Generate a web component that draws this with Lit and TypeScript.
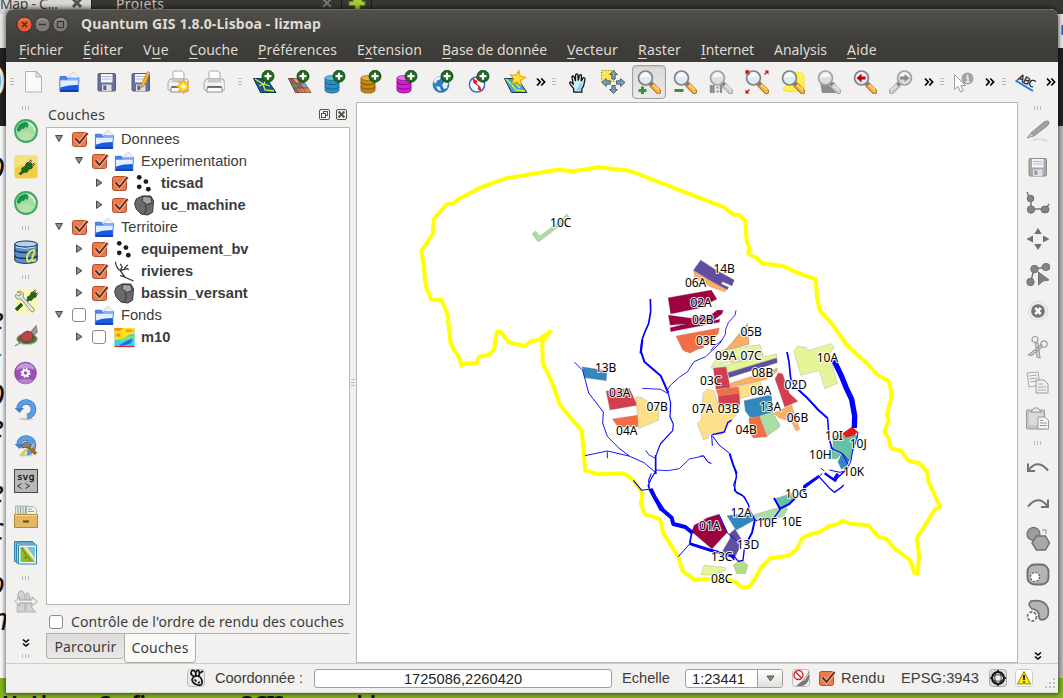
import { LitElement, html, svg, css } from "lit";
import { customElement, property } from "lit/decorators.js";
import { styleMap } from "lit/directives/style-map.js";

/* ---------- label whose tracking is adjusted to a given advance width ---------- */
@customElement("fit-label")
class FitLabel extends LitElement {
  static styles = css`
    :host { display: inline-block; white-space: pre; }
    u { text-decoration-thickness: 1px; text-underline-offset: 3px; }
  `;
  @property({ type: Number }) w = 0;
  @property() text = "";
  @property({ type: Number }) key = -1;
  updated() {
    const s = this.renderRoot.querySelector("span") as HTMLElement;
    s.style.letterSpacing = "0px";
    const n = s.getBoundingClientRect().width;
    s.style.letterSpacing = (this.w - n) / this.text.length + "px";
  }
  render() {
    const k = this.key, t = this.text;
    return k < 0
      ? html`<span>${t}</span>`
      : html`<span>${t.slice(0, k)}<u>${t[k]}</u>${t.slice(k + 1)}</span>`;
  }
}

/* ---------- icons, 24 x 24 ---------- */
const plus = svg`<circle cx="15" cy="6.200" r="6" fill="#1f6b22" stroke="#0f4412" stroke-width=".8"/><path d="M15 2.700v7M11.500 6.200h7" stroke="#fff" stroke-width="2.2"/>`;
const dbBody = (a: string, b: string, c: string) => svg`
  <path d="M1 8v12c0 4 14 4 14 0V8z" fill=${a} stroke=${b} stroke-width=".8"/>
  <ellipse cx="8" cy="8" rx="7" ry="2.5" fill=${c} stroke=${b} stroke-width=".6"/>
  <path d="M1 12c0 3.4 14 3.4 14 0M1 16.5c0 3.4 14 3.4 14 0" fill="none" stroke=${b} stroke-width="1"/>${plus}`;
const lens = (o: any = "", grey = false) => svg`
  <path d="M14.5 14.5l7 7" stroke=${grey ? "#9e9e9e" : "#a8691a"} stroke-width="5.4" stroke-linecap="round"/>
  <path d="M14.5 14.5l7 7" stroke=${grey ? "#cfcfcf" : "#fbb23c"} stroke-width="3.8" stroke-linecap="round"/>
  <path d="M15.5 13.8l6.6 6.2" stroke=${grey ? "#eee" : "#ffe3a0"} stroke-width="1.2"/>
  <path d="M13 12.5l2.6 2.6" stroke="#777" stroke-width="3"/>
  <circle cx="8.5" cy="8" r="7" fill=${grey ? "#dedede" : "#dfeaf3"} stroke=${grey ? "#a2a2a2" : "#7d8388"} stroke-width="1.7"/>
  <path d="M3.5 8a5 5 0 0 1 10-1q-5-1-10 1z" fill="#fff" opacity=".75"/>${o}`;
const printer = svg`
  <path d="M6 9V2q0-1 1-1h8l2 2v6z" fill="#fff" stroke="#aaa"/>
  <path d="M3 9h17l2 4v6q0 1-1 1H2q-1 0-1-1v-6z" fill="#ececea" stroke="#a5a5a5"/>
  <path d="M5 9.5h13v3H5z" fill="#c9c9c9"/>
  <path d="M2 14h19" stroke="#fff"/><path d="M4.5 17h14l.8 5H3.7z" fill="#fafafa" stroke="#777" stroke-width=".8"/>
  <path d="M4.5 17h14" stroke="#555" stroke-width="1.6"/>`;
const floppy = (c1: string, c2: string, c3: string) => svg`
  <rect x="5" y="3.5" width="17.5" height="17.5" rx="1.2" fill=${c1} stroke=${c2}/>
  <rect x="8" y="4" width="11.5" height="8.5" fill="#f3f4f8"/><path d="M9 6.5h9.5M9 9h9.5" stroke="#b3b9c6"/>
  <rect x="9" y="14.5" width="9.5" height="6.5" fill="#dcdfe6"/><rect x="10.3" y="15.5" width="3" height="4.5" fill=${c3}/>`;
const folder = svg`
  <path d="M8 9l8-7 6 5v6H8z" fill="#f2f5fb" stroke="#b6c3de" stroke-width=".8"/>
  <path d="M10 9l6.500-5" stroke="#cfd8ea"/>
  <path d="M3 6.500h6l1.500 2.500H21v12H3z" fill="#4a86ea" stroke="#2d63c8" stroke-width=".8"/>
  <path d="M3 9.500l7 0 2-1.500h10l-1 13.300H3z" fill="#8db8f8" stroke="#3f76d8" stroke-width=".6"/>
  <path d="M3.500 10.500h17.500l-.4 4.500Q12 14.500 3.500 17.500z" fill="#e3eefe"/>
  <path d="M3.300 17.500Q12 14.500 21.200 15v6.500H3.300z" fill="#1a5ae0"/>
  <path d="M3 21h18.500" stroke="#0a3399" stroke-width="1.300"/>`;
const star = (x: number, y: number, r: number) => {
  const p = Array.from({ length: 10 }, (_, i) => {
    const a = (i * Math.PI) / 5 - 1.4, q = i % 2 ? r * 0.45 : r;
    return `${(x + q * Math.cos(a)).toFixed(1)},${(y + q * Math.sin(a)).toFixed(1)}`;
  }).join(" ");
  return svg`<polygon points=${p} fill="#ffe72e" stroke="#f2a10a" stroke-width="1.1"/>`;
};
const burst = (x: number, y: number, r: number) => {
  const p = Array.from({ length: 16 }, (_, i) => {
    const a = (i * Math.PI) / 8, q = i % 2 ? r * 0.5 : r;
    return `${(x + q * Math.cos(a)).toFixed(1)},${(y + q * Math.sin(a)).toFixed(1)}`;
  }).join(" ");
  return svg`<polygon points=${p} fill="#ffe72e" stroke="#f29a0a" stroke-width=".9"/>`;
};
const globe = svg`
  <circle cx="12" cy="12" r="11" fill="#a4d9a0" stroke="#3ea564" stroke-width="1.8"/>
  <path d="M3 11Q4 4 11 3l4 1-1.5 5-2-1.5-1.5 2.5-2-.5q-1 2-4 3.500z" fill="#169447"/>
  <path d="M14 4q6 2 7 8" fill="none" stroke="#d9f4dc" stroke-width="1.6"/><path d="M4 15q6-4 16 0-2 6-8 6.500-6-.5-8-6.500z" fill="#b4e0ae"/>`;
const plug = svg`<path d="M1.500 20.500l4-4 0-4 5-3 1.500-4.500 5-1.500 4 4-1 5-4.500 1.500-3 4.500-4-.5-4 3.500z" fill="#1a6b1d" stroke="#12380f" stroke-width="1"/><path d="M16 5l3.500-4M20 9l3.500-3.500" stroke="#222" stroke-width="2.600"/><path d="M16 5l3.500-4M20 9l3.500-3.500" stroke="#f8f8f8" stroke-width="1.200"/>`;
const refresh = svg`<ellipse cx="12" cy="22" rx="7" ry="1.3" fill="#ccc"/>
  <path d="M5 11a7.300 7.300 0 1 1 8 8.500" fill="none" stroke="#3471c4" stroke-width="5.600"/>
  <path d="M5 11a7.300 7.300 0 1 1 8 8.500" fill="none" stroke="#5a9ee6" stroke-width="4.200"/><path d="M.5 11h9.500l-4.500 5z" fill="#3e7fd2"/>`;
const sel = "#6f6f6f";
const arrow4 = (c: string, s: string, k = 1) => svg`
  <g fill=${c} stroke=${s} stroke-width=${k}><path d="M12.500 .5l4 4h-2.300v4.500h-3.400v-4.500h-2.300z"/><path d="M12.500 23.500l4-4h-2.300v-4h-3.400v4h-2.300z"/>
  <path d="M.8 12.500l4.500-4v2.300h4v3.400h-4v2.300z"/><path d="M24 12.500l-4.500-4v2.300h-4v3.400h4v2.300z"/></g>`;
const I: Record<string, any> = {
  none: "",
  file: svg`<path d="M4.500 1.500h11l5 5v15.500h-16z" fill="#f8f9fb" stroke="#b0b3b8"/><path d="M15 1.500v5.500h5.500z" fill="#e3e6ea" stroke="#b0b3b8"/>`,
  folder,
  save: floppy("#65719a", "#505b80", "#58628a"),
  saveas: svg`<g transform="translate(-2 0)">${floppy("#65719a", "#505b80", "#58628a")}</g><path d="M18.500 1.500l2.500 1.500-6 13-3 2 .500-3.500z" fill="#ffb52e" stroke="#c97d12" stroke-width=".8"/><path d="M18.500 1.500l2.500 1.500-1 2.200-2.500-1.400z" fill="#e8a79b"/>`,
  print: svg`<g transform="translate(2 0)">${printer}</g>`,
  printnew: svg`<g transform="translate(2 0)">${printer}${burst(16.500, 16.500, 7.200)}<circle cx="16.500" cy="16.500" r="2" fill="#fff"/></g>`,
  vector: svg`<path d="M.5 8.500h13l9.500 14h-15.500z" fill="#15568c" stroke="#093a66"/><path d="M2 9l8 5 2 6 9 1M13 9l-2 5 6 2M10 14l-4 2" fill="none" stroke="#d9ef2f" stroke-width="1.300"/>${plus}`,
  raster: svg`<path d="M.5 8.500h13l9.500 14h-15.500z" fill="#b8506a" stroke="#6d4436"/><path d="M5 8.500h4l3 4.700h-4z" fill="#e4a08a"/><path d="M3 13h6l3 4.500h-6z" fill="#4aa04f"/><path d="M12 13h4.500l3 4.500h-4.500z" fill="#7aaac3"/><path d="M9 18h11l3 4.500h-11z" fill="#d78458"/><path d="M3 13h13.500M6 18h13.500M5 8.500l9 14M9 8.500l9 14" stroke="#6d4436" stroke-width=".7"/>${plus}`,
  postgis: dbBody("#2b8fc4", "#1b5f8d", "#68b8e2"),
  spatialite: dbBody("#c8860d", "#7d5006", "#e8b04c"),
  mssql: dbBody("#d61fd4", "#7e0b7d", "#ee6bec"),
  wms: svg`<circle cx="9" cy="14.500" r="8" fill="#2f7fbf" stroke="#2b6ea6" stroke-width=".6"/><path d="M2 10q3-4 7-3.500l-1 3-3 1-1 3-2-1zM4 16l4 1 1 4-3-1zM12 12l4 1-1 5-3 1-2-4z" fill="#e6f2fb"/>${plus}`,
  wfs: svg`<circle cx="9" cy="14.500" r="7.600" fill="#fff" stroke="#3d67e3" stroke-width="1.500"/><path d="M5 9l4 2-1 3 4 3 1 4-3-2 1-3-5-3z" fill="#e1242b" stroke="#e1242b" stroke-width="1"/><path d="M8 8l3 3" stroke="#e1242b"/>${plus}`,
  newshp: svg`<path d="M.5 8.500h13l9.500 14h-15.500z" fill="#3fa4d8" stroke="#123a5c"/><path d="M2 9l6 6 4 5 9 1M12 14l4 4" fill="none" stroke="#d9ef2f" stroke-width="1.500"/>${star(13.500, 8.500, 8)}`,
  hand: svg`<g transform="translate(1.500 1.500) scale(.9)"><path d="M8 23v-4L4 14q-1.200-3 1-2.300l2.500 2.300L6 6q.5-2 2.500 0L10 10.500V4q1.300-2.500 2.700 0l.3 6L14.500 4q1.700-1.500 2.200.7l-.4 6.300L18.500 7q2.200-.7 2 1.700l-1.500 7.300-2 3.500v3.500z" fill="#cdebf8" stroke="#111" stroke-width="1.400"/><path d="M9 21q4-1 6-8l2 0-1 8z" fill="#8fcbe8"/></g>`,
  pan: svg`<rect x=".5" y=".5" width="13" height="11" fill="#ffe45a" stroke="#8d7a12" stroke-width=".9" stroke-dasharray="1.500 1.500"/>${arrow4("#7d9db3", "#2c5067", 0.8)}`,
  zoomin: lens(svg`<path d="M5.500 16.500v8M1.500 20.500h8" stroke="#2d9b2f" stroke-width="3"/>`),
  zoomout: lens(svg`<path d="M1.500 20.500h9" stroke="#2d9b2f" stroke-width="3"/>`),
  zoomnat: lens(svg`<path d="M2 15v8M4.500 15v8M12 15v8" stroke="#8d8d8d" stroke-width="2.400"/><path d="M8.500 16.500v2M8.500 20.500v2" stroke="#8d8d8d" stroke-width="2"/>`, true),
  zoomfull: svg`${lens()}<g fill="#cf1010"><path d="M.5 .5h4L1.500 4.500z"/><path d="M2 2l2.500 2.500M22 2l-2.500 2.500M2 22l2.500-2.500" stroke="#cf1010" stroke-width="1.300"/><path d="M23.500 .5v4l-4-4z"/><path d="M.5 23.500v-4l4 4z"/><path d="M.5 .5v4l4-4z"/></g>`,
  zoomsel: svg`<path d="M14 2q10 0 9 6v10q-1 4-8 3-7 2-13-1-1-2 3-4 7-2 7-6z" fill="#fff04a" stroke="#f5e62a"/>${lens()}`,
  zoomlay: svg`<path d="M3 12h14l6.500 11H5z" fill="#8b8b8b"/>${lens("", true)}`,
  zoomlast: lens(svg`<path d="M3.500 8l5-4.500v3h4v3h-4v3z" fill="#c80000"/>`),
  zoomnext: svg`<g transform="translate(24 0) scale(-1 1)">${lens(svg`<path d="M3.500 8l5-4v2.500h4.500v3H8.500V12z" fill="#8a8a8a"/>`, true)}</g>`,
  identify: svg`<circle cx="15.500" cy="8.500" r="6" fill="#a3a3a3"/><path d="M15.500 4.500v1.800M14 7.500h2v4M13.500 12h4" stroke="#eee" stroke-width="1.500" fill="none"/><path d="M2.500 4.500v15l3.500-3 2.500 5.500 2.800-1.200-2.400-5.300h4.600z" fill="#fdfdfd" stroke="#9b9b9b"/>`,
  abc: svg`<path d="M.5 10.500l17.500 10.500" stroke="#1480f2" stroke-width="2"/><text x="0" y="0" transform="translate(2 10) rotate(26)" font-size="10" font-family="Noto Sans, sans-serif" fill="#111" stroke="#111" stroke-width=".3" textLength="18">ABC</text>`,
  more: svg`<path d="M8 8.500l3.300 3.500L8 15.500M12.300 8.500l3.300 3.500-3.300 3.500" fill="none" stroke="#000" stroke-width="1.700"/>`,
  moreV: svg`<path d="M9 8.500l3 2.500 3-2.500M9 12.500l3 2.500 3-2.500" fill="none" stroke="#000" stroke-width="1.600"/>`,
  globe,
  plug: svg`<rect x=".5" y=".5" width="23" height="23" rx="3" fill="#efcf43"/><path d="M1 3q0-2 2-2h18q2 0 2 2v6Q12 8 1 13z" fill="#f7e07c"/><g transform="translate(4 4.500) scale(.7)">${plug}</g>`,
  dbnote: svg`<path d="M.8 4v16c0 4.500 22.400 4.500 22.400 0V4z" fill="#5b8fc6" stroke="#17365c"/><ellipse cx="12" cy="4" rx="11.200" ry="3" fill="#b9d2ec" stroke="#17365c"/><path d="M.8 9.500c0 4 22.400 4 22.400 0M.8 15.500c0 4 22.400 4 22.400 0" fill="none" stroke="#17365c" stroke-width="1.500"/><path d="M2 7q9 3 19 0" fill="none" stroke="#cfe1f5"/><path d="M21 10q-8 1-8 8t5 1l3-9q-4 10-2 11l3-1" fill="none" stroke="#dbe84c" stroke-width="2"/>`,
  wrench: svg`<rect x="1" y="1" width="23" height="23" rx="2" fill="#fbf8b4"/><path d="M2 21l6-6" stroke="#145a14" stroke-width="3.500"/><g transform="translate(10 .5) scale(.6)">${plug}</g><path d="M3 3q4-2 6 1 1 2 0 4l11 12q1 2-1 3-2 0-3-2L7 10q-3 1-5-1-1-2 0-4l3 2 2-1-1-2z" fill="#e3e4e4" stroke="#8d8d8d"/>`,
  saturn: svg`<ellipse cx="13" cy="14" rx="10.500" ry="5.500" fill="#3f7a38" stroke="#b9c9b2"/><path d="M1 21l8-5M17 7l5-6 1 6-3 3z" stroke="#888" fill="#9b9b9b" stroke-width="1.400"/><path d="M6 13q2-6 8-7 6 2 5 6-1 5-7 5-5 0-6-4z" fill="#b8454a" stroke="#7d2222" stroke-width=".8"/>`,
  gear: svg`<circle cx="11.500" cy="12" r="10.800" fill="#9a50b5" stroke="#7c3e94" stroke-width=".8"/><path d="M2 9a10 10 0 0 1 19 0q-9-4-19 0z" fill="#c497d6"/><path d="M4 19q8-2 15 0-3 4-7.500 4T4 19z" fill="#ba81cf"/><circle cx="11.500" cy="12" r="2.800" fill="none" stroke="#fff" stroke-width="2"/><circle cx="11.500" cy="12" r="4.200" fill="none" stroke="#fff" stroke-width="1.600" stroke-dasharray="1.700 1.600"/>`,
  refresh,
  refresht: svg`${refresh}<path d="M8 21l9-9M7 23l3-3" stroke="#d8cf57" stroke-width="2.500"/><path d="M13 12l9 9" stroke="#ad6717" stroke-width="3.500"/><path d="M8 12q2-4 6-3l3 3-2 4q-1-3-7-1z" fill="#85857f" stroke="#555"/><path d="M20 11l-3 4" stroke="#bbb" stroke-width="2"/>`,
  svgi: svg`<rect x=".5" y=".5" width="23" height="23" fill="#b9b9b9" stroke="#444"/><text x="3.500" y="11" font-size="9" font-family="DejaVu Sans, sans-serif" fill="#111" stroke="#111" stroke-width=".3" textLength="17">svg</text><path d="M7.500 14.500L3.500 17l4 2.500M11.500 14.500l4 2.500-4 2.500" fill="none" stroke="#333"/>`,
  archive: svg`<path d="M1.500 1h13v9h-13z" fill="#dfe9e4" stroke="#aab9b1"/><path d="M4 1v8M6.500 1v8M9 1v8M11.500 1v8" stroke="#8fa69b"/><path d="M12.500 1.500h7l3 3V10h-10z" fill="#eef3ef" stroke="#a9b6ae"/><path d="M14 4h4M14 6.500h6" stroke="#8fa69b"/><path d="M.5 9.500h23v13H.5z" fill="#e3b763" stroke="#b58738"/><path d="M1 10.500h22" stroke="#f4dca0"/><path d="M9 16.500h6" stroke="#6e5320" stroke-width="2.200"/>`,
  layers: svg`<path d="M.5 .5h18v20H.5z" fill="#79bfe0" stroke="#2f83ad"/><path d="M2.500 2h18v20h-18z" fill="#a6d6ed" stroke="#2f83ad"/><path d="M4.500 4h18v19h-18z" fill="#eef8fc" stroke="#2f83ad"/><path d="M6.500 6h14.500v15h-14.500z" fill="#76c82a"/><path d="M11 6h10v12z" fill="#6fc4ea"/><path d="M9 6h4l8 11v4z" fill="#f3e4a3"/><path d="M8 7l4 7-1 4 2-3 4 5" fill="none" stroke="#d8442c" stroke-width="1"/>`,
  swipe: svg`<path d="M3 22L4 4q1-4 4-3t3 8l0 13zM12 22V5q0-3 2-2t2 8q1 8 6 11z" fill="#d2d2d0" stroke="#b0b0ae"/><path d="M1 11.500L5.500 7v3H18V7l5.500 4.500L18 16v-3H5.500v3z" fill="#efefed" stroke="#a3a3a1"/>`,
  pencil: svg`<path d="M5 14L18 3q4-2 5 0 0 3-2 4L8 17z" fill="#a2a2a2" stroke="#8d8d8d"/><path d="M1 19l4-5 3 3z" fill="#c6c6c6" stroke="#999"/><path d="M7 21q8-2 14 1" fill="none" stroke="#ddd" stroke-width="2"/>`,
  gsave: svg`<g transform="translate(-2 0)">${floppy("#a9a9a9", "#8a8a8a", "#999")}</g>`,
  addnode: svg`<path d="M1 1l3 7M5 8v10h15l3-5" fill="none" stroke="#777" stroke-width="1.500"/><g fill="#858585" stroke="#6f6f6f"><circle cx="4.500" cy="7.500" r="3.300"/><circle cx="5" cy="18.500" r="3.700"/><ellipse cx="19" cy="18.500" rx="4" ry="3.500"/></g>`,
  move: svg`<g fill=${sel}><path d="M12 1l3.800 6H8.200zM12 23l3.800-6H8.200zM.5 12l6.500-3.500v7zM23.500 12L17 8.500v7z"/></g>`,
  nodes: svg`<path d="M5 18L8 6l13-2" fill="none" stroke="#777" stroke-width="1.500"/><g fill="#858585" stroke="#6f6f6f"><circle cx="8.500" cy="6" r="3.700"/><circle cx="4.500" cy="19" r="3.700"/><ellipse cx="20" cy="4" rx="4" ry="3.500"/></g><path d="M12.500 9v13l4.500-4 6-1z" fill="#808080" stroke="#6f6f6f"/>`,
  del: svg`<path d="M6 4l8-2 7 5 1 9-7 5-9-1-4-7z" fill="#ececea" stroke="#ddd"/><circle cx="12" cy="12" r="6.800" fill="#747474"/><path d="M9.300 8.800l5.400 6.400M14.700 8.800l-5.400 6.400" stroke="#fff" stroke-width="2.600"/>`,
  cut: svg`<g fill="none" stroke="#9c9c9c" stroke-width="1.200"><circle cx="9" cy="4.500" r="3"/><circle cx="18" cy="9" r="3.200"/><path d="M9.500 8l1.500 14 3 1-2-15zM15.500 9.500L2.500 20l3 .5L16 12z" fill="#dededc"/></g>`,
  copy: svg`<path d="M1 2l11-1 2 13-11 2z" fill="#f4f4f2" stroke="#a5a5a5"/><path d="M3 5l8-1M3.500 8l8-1M4 11l8-1" stroke="#a5a5a5"/><path d="M10 9h8l4 4v9H10z" fill="#efefed" stroke="#999"/><path d="M12 13h5M12 16h8M12 19h8" stroke="#aaa"/>`,
  paste: svg`<rect x=".5" y="3" width="18" height="19" rx="1" fill="#c4c4c2" stroke="#999"/><path d="M3 6h14v12H3z" fill="#dadad8"/><path d="M5 5l3-4h4l3 4z" fill="#eee" stroke="#999"/><path d="M12 10h7l3.500 3.500V22H12z" fill="#f5f5f3" stroke="#999"/><path d="M14 13.500h3M14 16h7M14 18.500h7" stroke="#999"/>`,
  undo: svg`<path d="M3 14.500Q12 3.500 22 15.500" fill="none" stroke="#737373" stroke-width="2"/><path d="M2 8.500v7.500h7" fill="none" stroke="#737373" stroke-width="2"/>`,
  redo: svg`<path d="M2 15.500Q12 3.500 21 14.500" fill="none" stroke="#737373" stroke-width="2"/><path d="M22 8.500v7.500h-7" fill="none" stroke="#737373" stroke-width="2"/>`,
  simplify: svg`<circle cx="7.500" cy="7" r="6.500" fill="#9c9c9c" stroke="#6d6d6d" stroke-width="1.200"/><path d="M10.500 9h9l4 7-4 7h-9L6 16z" fill="#a8a8a8" stroke="#6d6d6d" stroke-width="1.400"/><path d="M16 3h4v4" fill="none" stroke="#888"/>`,
  ring: svg`<rect x="1.500" y="1.500" width="21" height="20" rx="7" fill="#b4b4b4" stroke="#6f6f6f" stroke-width="1.900"/><circle cx="9" cy="14" r="4.500" fill="#fff" stroke="#555" stroke-width="1.200" stroke-dasharray="2 1.500"/>`,
  part: svg`<path d="M5 2q14-2 17 7 2 11-6 12-4-1-3-6-2-5-7-5-5-4-1-8z" fill="#b4b4b4" stroke="#6f6f6f" stroke-width="1.600"/><circle cx="6" cy="17.500" r="4.500" fill="#fff" stroke="#777" stroke-width="1.800" stroke-dasharray="3 1.500"/>`,
  points: svg`<g fill="#1c1c1c"><circle cx="7" cy="5.500" r="2.500"/><circle cx="14" cy="10" r="2.500"/><circle cx="7" cy="15.500" r="2.500"/><circle cx="16.500" cy="18" r="2.500"/></g>`,
  poly: svg`<path d="M4 5l6-3 9 0 3 5-1 12-5 3-7-1-5-5-2-6z" fill="#6a6a6a" stroke="#333"/><path d="M11 2.500l8 .5 1.500 6-5.500 2-5-4z" fill="#a2a2a2" stroke="#333"/><path d="M13 11l1.500 4-2 6" fill="none" stroke="#333"/>`,
  line: svg`<path d="M3 2q1 7 5 9l5 7 9 4M8 11l7-2 2 1M8 4l2 3-2 4M16 5l-4 4M13 18l-5-2" fill="none" stroke="#333" stroke-width="1.300"/>`,
  heat: svg`<rect x="2" y="2" width="21" height="20" fill="#35cfee"/><path d="M2 2h21v6l-6 1-4 4-6 1-5 1z" fill="#ffe11a"/><path d="M2 2h9l-3 3H2zM14 4h7v2h-7zM4 8h4v3H3z" fill="#ff8a12"/><path d="M7 14l8-3 8-1v3l-9 2-6 1z" fill="#7be08a"/><path d="M16 15l5-2-2 5-6 2-6 1 2-2z" fill="#1b6bea"/><path d="M2 21.500h21" stroke="#e01414"/>`,
};
const icon = (n: string) => html`<svg class="ic" width="24" height="24" viewBox="0 0 24 24">${I[n]}</svg>`;

/* ---------- toolbar contents: [icon, cell size] ---------- */
type Cell = [string, number];
const TOP: Cell[] = [
  ["grip", 9], ["file", 36], ["folder", 36], ["save", 36], ["saveas", 36], ["printnew", 36], ["print", 36],
  ["grip", 17], ["vector", 34], ["raster", 36], ["postgis", 36], ["spatialite", 36], ["mssql", 36], ["wms", 36],
  ["wfs", 36], ["newshp", 36], ["more", 14], ["grip", 11], ["hand", 36], ["pan", 36], ["zoomin", 36], ["zoomout", 36],
  ["zoomnat", 36], ["zoomfull", 36], ["zoomsel", 36], ["zoomlay", 36], ["zoomlast", 36], ["zoomnext", 36],
  ["more", 19], ["grip", 8], ["identify", 36], ["more", 16], ["grip", 11], ["abc", 36], ["more", 12],
];
const LEFT: Cell[] = [
  ["grip", 11], ["globe", 36], ["plug", 36], ["globe", 36], ["grip", 13], ["dbnote", 36], ["grip", 13], ["wrench", 36],
  ["saturn", 36], ["gear", 36], ["refresh", 36], ["refresht", 36], ["svgi", 36], ["archive", 36], ["layers", 36],
  ["grip", 13], ["swipe", 36], ["none", 11], ["moreV", 24], ["grip", 2],
];
const RIGHT: Cell[] = [
  ["grip", 11], ["pencil", 36], ["gsave", 36], ["addnode", 36], ["move", 36], ["nodes", 36], ["del", 36], ["cut", 36],
  ["copy", 36], ["paste", 36], ["grip", 12], ["undo", 36], ["redo", 36], ["simplify", 36], ["ring", 36], ["part", 36],
  ["none", 21], ["moreV", 12],
];
const MENU: [string, number, number][] = [
  ["Fichier", 44, 0], ["Éditer", 40, 0], ["Vue", 26, 1], ["Couche", 49, 0], ["Préférences", 79, 0], ["Extension", 65, 1],
  ["Base de donnée", 105, 0], ["Vecteur", 51, 0], ["Raster", 43, 0], ["Internet", 53, 0], ["Analysis", 53, -1], ["Aide", 30, 0],
];
/* level, icon, name, open, checked */
const TREE: [number, string, string, boolean, boolean][] = [
  [0, "folder", "Donnees", true, true], [1, "folder", "Experimentation", true, true],
  [2, "points", "ticsad", false, true], [2, "poly", "uc_machine", false, true],
  [0, "folder", "Territoire", true, true], [1, "points", "equipement_bv", false, true],
  [1, "line", "rivieres", false, true], [1, "poly", "bassin_versant", false, true],
  [0, "folder", "Fonds", true, false], [1, "heat", "m10", false, false],
];

/* ---------- map geometry; sheets are drawn at triple scale from their own origin ---------- */
const BASIN = "421.3,251 432.7,234 434,218.7 446.7,204.3 453.3,203.3 458.3,199.3 481.7,187 505.7,178.3 533.3,173.7 558,169.7 572,171.3 598.7,167.3 629.3,170.7 650,178.7 725,207.7 733.3,214.7 739.3,214.7 745,220.7 747,243.3 749.3,246.7 748.3,254 756.7,258 762.7,263.7 782.7,265.7 793.3,271 815.7,279.3 817.3,300 820,311 831.7,323.3 846.7,345 866.7,363.3 878.7,376 888.3,380.3 891.3,391.7 891.3,398.3 886.7,415 888.7,420.7 884.3,431.7 888.7,438.3 890.7,448 900.7,450.7 908.7,460.7 919.3,463.3 927,471.7 928.5,481.7 940,506.7 935,509.3 916.7,538.3 919,553.3 917.7,574 914.3,572.7 910,560 893.3,547.3 886.7,539 878.3,536.7 868.3,525.3 850,523.7 842.7,520.7 838.3,524 830,525.7 820,531.7 806.7,535.7 801.7,539 796.7,549.3 788.3,555.7 770,558.3 761.7,566.7 753.3,581.7 748.3,587.3 741.7,587.3 735,581.7 723.3,578.3 694,579.7 682.3,570.7 678.3,556.7 663.3,533.3 660,519.3 653.3,516.7 645,514.3 640.7,503.3 642.7,493.3 633.3,480 624,473.3 598.3,474.3 585,470 584,453.3 581.7,430.7 560,405 551,380 542.7,363.3 542.3,341.7 550,331.7 538.3,340 530.7,341.3 524.7,346.3 508.7,342.3 500.7,331.7 496.7,331.7 494,350 488.3,354.7 479,356.7 476.7,363.3 463.3,363.7 461.3,365.7 460,359.3 450.7,344.3 447.3,313.3 441.3,299.7 431,299.7 429,293.3 427,290 425,280 424,266.7";
interface Sheet { x: number; y: number; fills: [string, string][]; rivers: [number, string][]; }
const SHEETS: Sheet[] = [
  { x: 400, y: 150, fills: [["#abdda4", "396,252 407,243 420,258 460,228 492,202 500,192 508,200 500,210 440,258 415,276"]], rivers: [] },
  { x: 640, y: 150, fills: [
    ["#fdae61", "161,362 200,384 262,415 255,426 215,412 165,385"],
    ["#5e4fa2", "182,330 222,356 283,390 276,408 248,395 244,401 266,412 262,419 222,398 160,361"],
    ["#9e0142", "84,443 214,420 231,447 180,474 92,492"],
    ["#9e0142", "85,495 150,504 212,495 232,480 250,481 246,492 218,512 240,508 238,517 92,545 90,533 135,522 90,526"],
    ["#f46d43", "108,558 238,534 235,550 214,575 150,610 128,600"],
    ["#fdae61", "323,519 326,583 258,600"],
  ], rivers: [[5, "M31 447l1 38-6 35-13 30-7 20-5 40"], [2.5, "M288 481l-3 15-20 22-8 20-1 15-12 20-20 14-12 15"]] },
  { x: 560, y: 340, fills: [
    ["#3288bd", "66,80 141,92 139,122 74,113"],
    ["#d53e4f", "138,153 208,145 232,196 150,210"],
    ["#f46d43", "157,237 236,225 233,260 175,262"],
    ["#fee08b", "227,170 243,172 297,205 296,240 236,266"],
    ["#f46d43", "358,0 432,0 430,24 376,35 368,20"],
    ["#fee08b", "429,160 440,148 462,152 475,196 540,196 539,210 500,262 485,285 445,283 446,295 430,299 412,250 424,240"],
  ], rivers: [
    [6, "M247 0l-4 35 10 30 49 42 23 52"], [2.6, "M322 150l10-15 27-24 23-15 20-31 35-15 43-40 5-10"],
    [2.6, "M247 145l55 3 22 13"], [3.4, "M325 160l7 30-2 40 10 22-2 20-37 40-13 35"], [5, "M287 345v57"],
    [2.800, "M43 66l25 25 8 30 10 38 44 57-2 33 14 40 34 35 32 24"], [2.800, "M75 347l67-14 65 15 45 20 38 32M142 335v20"],
    [2.600, "M257 331l10 14 20 10M288 390l35 2 35-6 30-29 42-9 14 18 10 5"],
    [3.200, "M285 398l-10 15-11 24 4 12M274 400l-8 20 2 28-23 3-25-30"], [9, "M270 447l12 23 22 42"],
    [4, "M515 240l-12 8-10 28-36 8"], [3, "M455 285l2 32M457 287l20 28 32 25"], [6, "M509 341l10 32 11 27"], [3.500, "M530 400l-7 52 24 13 18 27 3 16"],
  ] },
  { x: 700, y: 330, fills: [
    ["#e6f598", "32,112 66,60 180,44 188,70 130,85"],
    ["#fee08b", "92,90 186,68 190,76 95,100"],
    ["#fdae61", "145,0 146,42 75,60 122,12"],
    ["#e6f598", "35,115 229,72 231,84 82,128 80,112"],
    ["#5e4fa2", "84,128 230,84 232,98 87,143"],
    ["#fdae61", "90,160 215,120 233,114 230,126 200,148 94,172"],
    ["#d53e4f", "40,115 78,111 91,173 48,178"],
    ["#f46d43", "48,179 116,170 118,190 55,197"],
    ["#d53e4f", "54,198 118,190 120,224 58,232"],
    ["#fee08b", "119,168 180,152 190,185 120,206"],
    ["#3288bd", "132,212 214,194 220,246 180,260 150,262 136,244"],
    ["#f46d43", "147,264 178,258 202,320 160,324 150,310"],
    ["#abdda4", "179,257 217,246 240,284 238,292 202,318"],
    ["#fdae61", "220,250 275,224 286,262 300,298 288,303 275,276 238,264"],
    ["#d53e4f", "225,146 235,128 248,132 268,190 294,214 254,231"],
    ["#e6f598", "281,62 292,49 318,52 324,62 392,41 404,52 388,72 412,160 374,176 358,122 302,136"],
    ["#66c2a5", "398,322 440,305 474,318 450,392 418,370 400,362"],
    ["#66c2a5", "394,340 402,366 422,372 412,386 384,386"],
    ["#3288bd", "424,372 447,392 440,410 424,418 414,396"],
    ["#e31a1c", "429,310 456,291 473,305 462,316 438,322"],
  ], rivers: [
    [5, "M261 66l6 30 5 50 15 26"], [6, "M287 172l35 32 33 36 28 25"], [4.500, "M383 265l4 60 8 28 6 6"], [3, "M400 358l27 12 20 22M427 371l17 32"],
    [16, "M401 90l22 45 15 37 17 36 9 50-1 36"], [3, "M474 306l-4 22-12 34-6 34-12 22"], [4, "M440 418l-28 26-10 0M402 444l10-14"],
    [6, "M357 440l-45 34 0 12"], [3, "M357 440l10 -10"], [7, "M374 430l32 22 8-20"], [3, "M363 415l10 8M388 420l32 7 11-3"],
    [4, "M357 440l32 35 14 12 20-14 8-8"], [2, "M0 378l12-1 10 18 12 5"],
  ] },
  { x: 620, y: 470, fills: [
    ["#9e0142", "215,185 222,166 262,143 296,133 322,187 276,237"],
    ["#3288bd", "321,137 360,132 405,138 404,150 348,181"],
    ["#5e4fa2", "345,177 366,210 356,240 342,266 306,246 330,205 330,190"],
    ["#abdda4", "402,134 450,120 498,108 503,118 490,140 440,152 408,152"],
    ["#66c2a5", "464,86 520,68 525,88 480,117"],
    ["#b5dd85", "340,285 362,270 384,285 376,311 350,311"],
    ["#e6f598", "252,286 316,292 318,300 278,316 243,314"],
  ], rivers: [
    [12, "M92 57l14 28 23 36 26 22 5 19 36 9 22 18"], [5, "M216 185l-7 36"], [3, "M209 222l-34 38M209 222"],
    [9, "M209 221l60 19 74 20"], [4, "M343 260l12 14 14-3 4-35"], [6, "M342 270l-10-18"],
    [3, "M297 133l26 57 16 12 12 12"], [3.500, "M345 0l5 20-9 24 8 24 24 12 12 24 4 16 16 30"],
    [6, "M405 148l-9 40-20 38"], [4, "M408 152l40-8 8 8 26-36"], [6, "M462 84l18 32 28-14 20-20"], [7, "M553 56v-8l44-30"],
  ] },
];
const LABELS: [string, number, number][] = [
  ["10C", 550.7, 227.3], ["14B", 714, 273], ["06A", 685.5, 287], ["02A", 691, 307.3], ["02B", 692.7, 323.7],
  ["03E", 696.5, 344.7], ["05B", 741, 336], ["13B", 595.5, 372], ["03A", 609.7, 397], ["07B", 647, 411],
  ["04A", 616.7, 434.7], ["09A", 715.7, 360], ["07C", 741, 360], ["03C", 700.7, 384.7], ["07A", 692.7, 413.3],
  ["03B", 718.3, 413.3], ["04B", 736, 434], ["08B", 752.3, 376.7], ["08A", 750.7, 395], ["02D", 785, 388.7],
  ["13A", 760.3, 411], ["06B", 787.3, 422], ["10A", 817.3, 361.7], ["10I", 825.7, 440], ["10J", 850.3, 447.7],
  ["10H", 809.7, 459], ["10K", 843.7, 475.7], ["10G", 785.7, 497.7], ["12A", 731, 517], ["10F", 757.7, 527.3],
  ["10E", 782, 525.7], ["13D", 737.3, 549], ["13C", 711.7, 561.3], ["01A", 699.7, 530], ["08C", 711.7, 583],
];

@customElement("map-canvas")
class MapCanvas extends LitElement {
  static styles = css`
    :host { display: block; background: #fff; overflow: hidden; }
    svg { display: block; }
    text { font: 12px "Noto Sans", sans-serif; fill: #000; stroke: #fff; stroke-width: 2.2px; stroke-linejoin: round; paint-order: stroke; stroke-opacity: .85; }
  `;
  render() {
    return html`<svg width="660" height="559" viewBox="357 103 660 559">
      <polygon points=${BASIN} fill="none" stroke="#ffff00" stroke-width="4" stroke-linejoin="round"/>
      ${SHEETS.map((s) => svg`<g transform="translate(${s.x} ${s.y}) scale(.33333)">
        ${s.fills.map(([c, p]) => svg`<polygon points=${p} fill=${c} stroke="#8a8a8a" stroke-width="1.500" stroke-opacity=".6"/>`)}</g>`)}
      ${SHEETS.map((s) => svg`<g transform="translate(${s.x} ${s.y}) scale(.33333)">
        ${s.rivers.map(([w, d]) => svg`<path d=${d} fill="none" stroke="#0000ff" stroke-width=${w} stroke-linejoin="round"/>`)}</g>`)}
      <polygon points="843,433.300 852,427 857.700,431.700 854,435.300 846,437.300" fill="#e31a1c"/>
      ${LABELS.map(([t, x, y]) => svg`<text x=${x - 0.6} y=${y}>${t}</text>`)}
    </svg>`;
  }
}

@customElement("app-root")
class AppRoot extends LitElement {
  static styles = css`
    :host { display: block; width: 1063px; height: 698px; overflow: hidden; color: #3c3c3c; font: 14px "Noto Sans", sans-serif; }
    * { box-sizing: border-box; }
    svg { display: block; flex: none; }
    .screen { position: relative; display: grid; width: 1063px; height: 698px; overflow: hidden; background: #fdfdfd; }
    .back { position: absolute; inset: 0; }
    .window { position: absolute; left: 6px; top: 9px; width: 1052px; height: 684px; display: grid;
      grid-template-rows: 29px 24px 40px 561px 30px; background: #f2f1f0; border-radius: 8px 8px 0 0; overflow: hidden; }
    .shade { position: absolute; left: 6px; top: 9px; width: 1052px; height: 684px; border-radius: 8px 8px 0 0; box-shadow: 0 0 5px 1px rgba(0,0,0,.6); }
    .title { display: flex; align-items: center; gap: 1px; padding-left: 10px; background: linear-gradient(#504f4a, #403f3b); border-top: 1px solid #6a6963; color: #dfdbd2; }
    .title fit-label { font-weight: 700; margin: -2px 0 0 11px; }
    .menu { display: flex; gap: 20px; padding: 1px 0 0 13px; line-height: 22px; background: linear-gradient(#403f3b, #3c3b37); color: #dfdbd2; }
    .bar { display: flex; align-items: center; }
    .vbar { display: flex; flex-direction: column; align-items: center; width: 40px; height: 561px; }
    .cell { display: flex; align-items: center; justify-content: center; flex: none; overflow: visible; }
    .cell.on { height: 34px; border: 1px solid #a3a19e; border-radius: 4px; background: linear-gradient(#dddbd9, #eceae8); box-shadow: inset 0 1px 2px #c4c2bf; margin: 0 1px; }
    .gh { width: 4px; height: 8px; background: repeating-linear-gradient(#bdbbb8 0 1px, #f2f1f0 1px 3px); }
    .gv { width: 8px; height: 4px; background: repeating-linear-gradient(90deg, #bdbbb8 0 1px, #f2f1f0 1px 3px); }
    .lead .gh { margin-left: 3px; }
    .body { display: grid; grid-template-columns: 40px 304px 6px 662px 40px; grid-template-rows: 561px; }
    .dock { display: grid; grid-template-rows: 25px 478px 28px 30px; }
    .dhead { display: flex; align-items: center; gap: 6px; padding: 0 3px 0 2px; }
    .dhead fit-label { margin-right: auto; }
    .tree { background: #fff; border: 1px solid #b9b6b1; font: 14.67px "Liberation Sans", Arial, sans-serif; }
    .row { display: flex; align-items: center; height: 22px; }
    .row .ex { margin-right: 7px; }
    .row .ic { margin: 0 6px 0 4px; }
    .row.bold { font-weight: 700; }
    .name { line-height: 22px; }
    .order { display: flex; align-items: center; gap: 7px; padding: 5px 0 0 2px; }
    .tabs { display: flex; align-items: flex-start; border-top: 1px solid #b1aeaa; }
    .tab { display: flex; justify-content: center; border: 1px solid #b1aeaa; border-top: 0; border-radius: 0 0 4px 4px; }
    .tab.off { width: 78px; height: 25px; padding-top: 3px; background: linear-gradient(#dedcda, #e9e8e6); border-right: 0; }
    .tab.cur { width: 72px; height: 29px; padding-top: 4px; background: #f9f9f8; }
    .split { display: flex; align-items: center; justify-content: center; }
    .frame { border: 1px solid #b9b6b1; display: grid; }
    .status { display: flex; align-items: center; border-top: 1px solid #cfccc9; font: 14.67px "Liberation Sans", Arial, sans-serif; border-bottom: 1px solid #dad8d5; }
    .field { height: 19px; border: 1px solid #a19e9a; border-radius: 3px; background: #fff; line-height: 18px; color: #222; }
    .coord { width: 298px; text-align: center; margin: 0 10px 0 11px; }
    .scale { width: 98px; display: flex; padding-left: 6px; margin: 0 9px 0 15px; overflow: hidden; }
    .drop { margin-left: auto; width: 25px; border-left: 1px solid #a19e9a; background: linear-gradient(#fefefe, #e2e0de); display: flex; align-items: center; justify-content: center; }
    .grip { margin-left: auto; align-self: flex-end; }
  `;
  bar(cells: Cell[], vertical = false) {
    return cells.map(([n, s], i) => html`<div class="cell ${n === "zoomin" ? "on" : ""} ${!vertical && i === 0 ? "lead" : ""}"
      style=${styleMap({ [vertical ? "height" : "width"]: (n === "zoomin" ? s - 2 : s) + "px" })}>
      ${n === "grip" ? html`<div class=${vertical ? "gv" : "gh"}></div>` : icon(n)}</div>`);
  }
  check(on: boolean) {
    return html`<svg width="19" height="18" viewBox="0 0 19 18">${on
      ? svg`<rect x="1.500" y="2.500" width="14" height="14" rx="2" fill="#ee7a4c" stroke="#b3512b"/><path d="M4.500 8.500l4 4.500L16.500 3" fill="none" stroke="#f8b79b" stroke-width="3.800"/><path d="M4.500 8.500l4 4.500L16.500 3" fill="none" stroke="#5b3324" stroke-width="2"/>`
      : svg`<rect x="1.500" y="2.500" width="13" height="13" rx="2.500" fill="#fff" stroke="#8e8a85"/>`}</svg>`;
  }
  render() {
    return html`<div class="screen">
      <svg class="back" width="1063" height="698" viewBox="0 0 1063 698">
        <rect width="1063" height="48" fill="#e9e8e6"/>
        <rect width="91" height="14" fill="#d9d7d4"/>
        <rect x="91" width="972" height="14" fill="#383733"/>
        <path d="M91.500 0v10M341.500 0v10M371.500 0v10" stroke="#1e1d1b"/>
        <g font-family="Noto Sans, sans-serif" font-size="14"><text x="0" y="9" fill="#444" textLength="58">Map - C...</text><text x="116" y="9" fill="#c9c5bc" textLength="48">Projets</text></g>
        <path d="M73 -1l8 8M81 -1l-8 8" stroke="#555" stroke-width="3"/><path d="M323 -1l8 8M331 -1l-8 8" stroke="#777" stroke-width="2"/>
        <path d="M349 1.500h4v-3h9v3h3v4h-5v4h-5v-4h-6z" fill="#a5cf35" stroke="#5f8216"/>
        <rect y="48" width="1063" height="78" fill="#232323"/>
        <text x="-7" y="90" font-family="Liberation Serif, serif" font-size="38" fill="#eee">)</text>
        <g font-family="Noto Sans, sans-serif" font-size="30" font-style="italic" fill="#111"><text x="-17" y="179">O</text><text x="-11" y="330">e</text><text x="-11" y="370" fill="#2a78b8">s</text><text x="-17" y="406">O</text><text x="-11" y="438">e</text><text x="-11" y="503">e</text><text x="-10" y="540">c</text><text x="-12" y="594">o</text><text x="-18" y="630">m</text></g>
        <rect x="1060" y="14" width="3" height="34" fill="#eee"/><path d="M1063 25v10" stroke="#2b4fa5" stroke-width="3"/>
        <rect x="1057" y="126" width="6" height="552" fill="#bdbdbd"/>
        <rect y="678" width="1063" height="20" fill="#84b71d"/>
        <text x="2" y="711" font-family="Noto Sans, sans-serif" font-size="21" font-weight="700" fill="#111" textLength="374">Un Lizmap Configurer avec QGIS comme ici</text>
      </svg>
      <div class="shade"></div>
      <div class="window">
        <div class="title">
          ${["c", "m", "x"].map((k) => html`<svg width="17" height="17" viewBox="0 0 17 17"><circle cx="8.500" cy="8.500" r="7.600" fill=${k === "c" ? "#ee5a2b" : "#7d7b74"} stroke="#33322e"/>
            <path d="M3 5.500q5.500-5 11 0" fill="none" stroke="#fff" stroke-opacity=".25"/>
            ${k === "c" ? svg`<path d="M6 6l5 5M11 6l-5 5" stroke="#4d2414" stroke-width="1.400"/>` : k === "m" ? svg`<path d="M5 8.500h7" stroke="#3a3935" stroke-width="1.400"/>` : svg`<rect x="5.500" y="5.500" width="6" height="6" fill="none" stroke="#3a3935" stroke-width="1.200"/>`}</svg>`)}
          <fit-label text="Quantum GIS 1.8.0-Lisboa - lizmap" .w=${240}></fit-label>
        </div>
        <div class="menu">${MENU.map(([t, w, k]) => html`<fit-label .text=${t} .w=${w} .key=${k} style=${styleMap({ width: w + "px" })}></fit-label>`)}</div>
        <div class="bar">${this.bar(TOP)}</div>
        <div class="body">
          <div class="vbar">${this.bar(LEFT, true)}</div>
          <div class="dock">
            <div class="dhead"><fit-label text="Couches" .w=${57}></fit-label>
              <svg width="11" height="11" viewBox="0 0 11 11" fill="none" stroke="#55534f"><rect x=".5" y=".5" width="10" height="10" rx="1.500"/><rect x="4.500" y="2.500" width="4" height="4"/><rect x="2.500" y="4.500" width="4" height="4" fill="#f2f1f0"/></svg>
              <svg width="11" height="11" viewBox="0 0 11 11" fill="none" stroke="#55534f"><rect x=".5" y=".5" width="10" height="10" rx="1.500"/><path d="M2.500 2.500l6 6M8.500 2.500l-6 6" stroke-width="2"/></svg>
            </div>
            <div class="tree">${TREE.map(([l, ic, n, open, on]) => html`<div class="row ${ic === "folder" ? "" : "bold"}" style=${styleMap({ paddingLeft: 7 + l * 20 + "px" })}>
              <svg class="ex" width="10" height="12" viewBox="0 0 10 12"><path d=${open ? "M1.500 2.500h7l-3.500 6z" : "M2.500 2l5.500 3.700-5.500 3.700z"} fill="#8f8d8a" stroke="#4c4a47"/></svg>
              ${this.check(on)}
              <svg class="ic" width="21" height="21" viewBox="2 1 21 22">${I[ic]}</svg><span class="name">${n}</span></div>`)}</div>
            <div class="order">${this.check(false)}<fit-label style="margin-left:-3px" text="Contrôle de l'ordre de rendu des couches" .w=${273}></fit-label></div>
            <div class="tabs"><div class="tab off"><fit-label text="Parcourir" .w=${62}></fit-label></div><div class="tab cur"><fit-label text="Couches" .w=${57}></fit-label></div></div>
          </div>
          <div class="split"><div class="gh"></div></div>
          <div class="frame"><map-canvas></map-canvas></div>
          <div class="vbar">${this.bar(RIGHT, true)}</div>
        </div>
        <div class="status">
          <svg style="margin-left:181px" width="18" height="18" viewBox="0 0 18 18"><rect x=".5" y=".5" width="17" height="17" rx="3" fill="#e9e8e6" stroke="#bbb"/><g fill="none" stroke="#111" stroke-width="1.700"><path d="M4 5q0-4 2.500-3.500T9 7q-3 1-5-2zM9 7q-1-5 1.500-5.500T12 7M5 11q1-4 5-4t5 5-4 4-6-5z"/><path d="M13 4l3-2M7.500 10.500l2 2M11 14l2-1"/></g></svg>
          <fit-label style="margin-left:10px" text="Coordonnée :" .w=${88}></fit-label>
          <div class="field coord">1725086,2260420</div>
          <fit-label text="Echelle" .w=${48}></fit-label>
          <div class="field scale">1:23441<div class="drop"><svg width="9" height="7" viewBox="0 0 9 7"><path d="M1 1h7L4.500 6z" fill="#8f8d8a" stroke="#55534f"/></svg></div></div>
          <svg width="18" height="18" viewBox="0 0 18 18"><rect x=".5" y=".5" width="17" height="17" rx="3" fill="#f4f3f2" stroke="#bbb"/><path d="M17 2q-4 8-8 11l-5 4h6q5-1 7-7z" fill="#777"/><path d="M12 12l5-8" stroke="#ddd"/><circle cx="6.500" cy="6" r="4.500" fill="#fff" stroke="#d3262c" stroke-width="1.400"/><path d="M3.300 2.700l6.500 6.500" stroke="#d3262c" stroke-width="1.400"/></svg>
          <div style="margin-left:8px">${this.check(true)}</div>
          <fit-label style="margin-left:4px" text="Rendu" .w=${44}></fit-label>
          <fit-label style="margin-left:16px" text="EPSG:3943" .w=${78}></fit-label>
          <svg style="margin-left:10px" width="18" height="18" viewBox="0 0 18 18"><rect x=".5" y=".5" width="17" height="17" rx="3" fill="#dddbd9" stroke="#aaa"/><circle cx="9" cy="9" r="6" fill="none" stroke="#111" stroke-width="2"/><ellipse cx="9" cy="9" rx="3" ry="6" fill="none" stroke="#222"/><ellipse cx="9" cy="9" rx="6" ry="3" fill="none" stroke="#222"/><rect x="6.500" y="6.500" width="5" height="5" fill="#eee"/><path d="M9 1v3M9 14v3M1 9h3M14 9h3" stroke="#111" stroke-width="1.500"/></svg>
          <svg style="margin-left:8px" width="18" height="18" viewBox="0 0 18 18"><rect x=".5" y=".5" width="17" height="17" rx="3" fill="#fff" stroke="#ccc"/><path d="M9 2.500L15.500 15h-13z" fill="#ffee00" stroke="#8b8512" stroke-linejoin="round"/><path d="M9 6v5M9 12.200v1.600" stroke="#111" stroke-width="1.700"/></svg>
          <svg class="grip" width="14" height="14" viewBox="0 0 14 14" fill="#c2c0bd"><path d="M9 0h2v2H9zM9 4h2v2H9zM5 4h2v2H5zM9 8h2v2H9zM5 8h2v2H5zM1 8h2v2H1z"/></svg>
        </div>
      </div>
    </div>`;
  }
}
